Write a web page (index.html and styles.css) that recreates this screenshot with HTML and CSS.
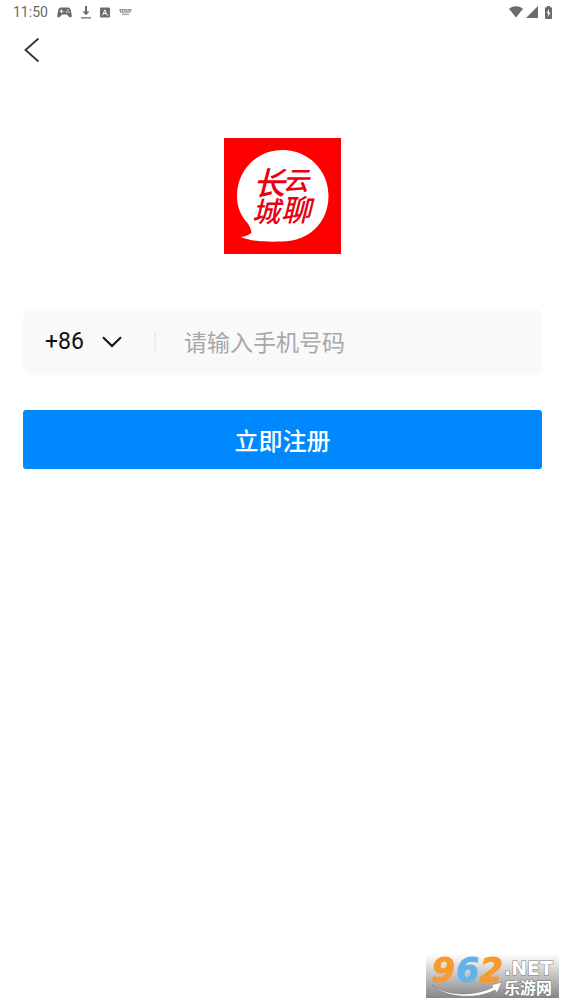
FILE: index.html
```html
<!DOCTYPE html>
<html lang="zh-CN">
<head>
    <meta charset="UTF-8">
    <meta name="viewport" content="width=device-width, initial-scale=1.0">
    <title>注册</title>
    <link rel="stylesheet" href="styles.css">
</head>
<body>
    <div class="status-bar">
        <span class="time">11:50</span>
        <!-- gamepad -->
        <svg class="icon-game" width="15" height="11" viewBox="0 0 15 11">
            <path fill-rule="evenodd" d="M4 .5h7c1.500 0 2.400 1 2.800 2.600l.9 4.900c.3 1.600-.4 2.400-1.300 2.400-.6 0-1-.3-1.400-.7L9.800 7.500H5.200L3 9.700c-.4.4-.8.7-1.400.7C.7 10.400 0 9.600.3 8l.9-4.900C1.600 1.500 2.500.5 4 .5zM4 2.600v1.200H2.800v1H4V6h1V4.800h1.200v-1H5V2.600zM10.200 2.200v1.200h1.200V2.200zM9 4.200v1.200h1.200V4.200zM11.300 4.600v1.200h1.200V4.600z"/>
        </svg>
        <!-- download -->
        <svg class="icon-download" width="10" height="13" viewBox="0 0 10 13">
            <path d="M4 0h2v5.500h2.500L5 9.200 1.500 5.500H4zM0 11.200h10v1.300H0z"/>
        </svg>
        <!-- input method -->
        <svg class="icon-ime" width="10" height="11" viewBox="0 0 10 11">
            <rect y=".5" width="10" height="10" rx="1"/>
            <path d="M2.600 8.300 4.800 2.800 7 8.300M3.400 6.500h2.800M8 7.500v1" fill="none" stroke="#fff" stroke-width="1"/>
        </svg>
        <!-- keyboard -->
        <svg class="icon-keyboard" width="13" height="7" viewBox="0 0 13 7">
            <path d="M.5 1h12M1 3h11" fill="none" stroke="#777" stroke-width="1.300" stroke-dasharray="1.500 .6"/>
            <path d="M3 4.800h7v1H3zM.5.3h12v.5H.5z" fill="#888"/>
        </svg>
        <div class="status-right">
            <svg width="14" height="12" viewBox="0 0 14 12">
                <path d="M0 2.800C4-.5 10-.5 14 2.800L7 11.500z"/>
            </svg>
            <svg width="12" height="12" viewBox="0 0 12 12">
                <path d="M12 0v12H0z"/>
            </svg>
            <svg class="icon-battery" width="7" height="13" viewBox="0 0 7 13">
                <path d="M2 0h3v1.200h1.200q.8 0 .8.8v10.200q0 .8-.8.8H.8q-.8 0-.8-.8V2q0-.8.8-.8H2z"/>
                <path d="M4 3 1.700 7.300h1.500V11l2.200-4.500H4z" fill="#fff"/>
            </svg>
        </div>
    </div>

    <header class="nav">
        <button type="button" class="back" aria-label="返回">
            <svg width="16" height="26" viewBox="0 0 16 26">
                <path d="M14.500 1.500 1.500 13l13 11.500" fill="none" stroke="#333" stroke-width="1.800"/>
            </svg>
        </button>
    </header>

    <main>
        <svg class="logo" width="117" height="116" viewBox="0 0 117 116" role="img" aria-label="长城云聊">
            <rect width="117" height="116" fill="#f00"/>
            <path d="M58.500 12C84 12 104.500 32 104.500 58S85 104 57 103.500C42 104 28 103.500 16.500 99c5-.5 8.500-1.800 11-4.200-.5-4-2-6.800-4-9.800C16 77 13 68 13 58c0-26 20-46 45.500-46z" fill="#fff"/>
            <g class="logo-text">
                <text x="29" y="57" font-size="32">长</text>
                <text x="28" y="84" font-size="28">城</text>
                <text x="59" y="52" font-size="26">云</text>
                <text x="57" y="83" font-size="30">聊</text>
            </g>
        </svg>

        <form>
            <div class="field">
                <div class="area-code">
                    <select aria-label="国家代码">
                        <option>+86</option>
                    </select>
                    <svg width="20" height="12" viewBox="0 0 20 12">
                        <path d="M1 1.200 10 10l9-8.800" fill="none" stroke="#111" stroke-width="2"/>
                    </svg>
                </div>
                <input type="tel" placeholder="请输入手机号码" aria-label="手机号码">
            </div>
            <button type="submit" class="submit">立即注册</button>
        </form>
    </main>

    <!-- site badge -->
    <svg class="badge" width="133" height="44" viewBox="0 0 133 44" role="img" aria-label="962.NET 乐游网">
        <defs>
            <linearGradient id="badgeBg" x1="0" y1="0" x2="0" y2="1">
                <stop offset="0" stop-color="#fff"/>
                <stop offset="1" stop-color="#858585"/>
            </linearGradient>
        </defs>
        <rect width="133" height="44" fill="url(#badgeBg)"/>
        <path d="M6 31c16 12 45 11 61 2l-2-2 11-3-5 11-2-3C51 46 19 44 6 31z" fill="#fff" stroke="#777" stroke-width=".6"/>
        <g class="badge-digits">
            <text x="6" y="28" fill="#f99a2c" stroke="#f99a2c">9</text>
            <text x="30" y="28" fill="#62b4e8" stroke="#62b4e8">6</text>
            <text x="54" y="28" fill="#f99a2c" stroke="#f99a2c">2</text>
        </g>
        <text class="badge-net" x="78" y="21">.NET</text>
        <text class="badge-name" x="78" y="40">乐游网</text>
    </svg>
</body>
</html>
```

FILE: styles.css
```css
* {
    box-sizing: border-box;
}

body {
    position: relative;
    min-height: 100vh;
    margin: 0;
    background-color: #fff;
    font-family: Roboto, "Noto Sans CJK SC", sans-serif;
}

button {
    padding: 0;
    border: none;
    cursor: pointer;
}

svg {
    display: block;
    flex: none;
}

.status-bar {
    display: flex;
    align-items: center;
    gap: 9px;
    height: 24px;
    padding: 0 13px;
    color: #6b6b6b;
    fill: #6b6b6b;
}

.time {
    font-size: 14px;
    line-height: 24px;
}

.status-right {
    display: flex;
    align-items: center;
    gap: 3px;
    margin-left: auto;
}

.icon-battery {
    margin-left: 4px;
}

.nav {
    display: flex;
    align-items: center;
    height: 52px;
    padding: 0 24px;
}

.back {
    background: none;
}

main {
    padding: 62px 23px 0;
}

.logo {
    margin: 0 auto;
}

.logo-text {
    fill: #e60012;
    font-family: "Noto Sans CJK SC", sans-serif;
    font-style: italic;
    font-weight: 500;
}

form {
    margin-top: 55px;
}

.field {
    display: flex;
    align-items: center;
    height: 66px;
    padding: 0 22px;
    background-color: #f9f9f9;
    border-radius: 8px;
}

.area-code {
    display: flex;
    align-items: center;
    gap: 18px;
    height: 20px;
    padding-right: 32px;
    border-right: 2px solid #ededed;
}

.area-code select {
    appearance: none;
    padding: 0;
    border: none;
    background: none;
    color: #111;
    font-family: inherit;
    font-size: 23px;
    line-height: 28px;
}

.field input {
    flex: 1;
    min-width: 0;
    padding: 0 0 2px 28px;
    border: none;
    outline: none;
    background: none;
    color: #111;
    font-family: "Noto Sans CJK SC", sans-serif;
    font-size: 23px;
}

.field input::placeholder {
    color: #a8a8a8;
}

.submit {
    width: 100%;
    height: 59px;
    margin-top: 35px;
    border-radius: 3px;
    background-color: #08f;
    color: #fff;
    font-family: "Noto Sans CJK SC", sans-serif;
    font-size: 24px;
    font-weight: 500;
}

.badge {
    position: absolute;
    right: 6px;
    bottom: 6px;
}

.badge-digits {
    font-family: "DejaVu Sans", sans-serif;
    font-size: 33px;
    font-weight: bold;
    font-style: italic;
    stroke-width: 1px;
}

.badge-net,
.badge-name {
    fill: #fff;
    stroke: #777;
    stroke-width: 1px;
    paint-order: stroke;
    font-weight: bold;
}

.badge-net {
    font-family: "DejaVu Sans", sans-serif;
    font-size: 19px;
}

.badge-name {
    font-family: "Noto Sans CJK SC", sans-serif;
    font-size: 16px;
}
```
